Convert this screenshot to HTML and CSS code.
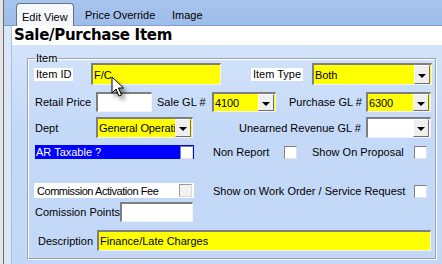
FILE: index.html
```html
<!DOCTYPE html>
<html lang="en">
<head>
    <meta charset="UTF-8">
    <meta name="viewport" content="width=device-width, initial-scale=1.0">
    <title>Sale/Purchase Item</title>
    <link rel="stylesheet" href="styles.css">
</head>
<body>
    <div class="window">
        <div class="frame-edge"></div>
        <div class="window-body">
            <div class="tab-strip">
                <div class="tab tab-active">Edit View</div>
                <div class="tab tab-price">Price Override</div>
                <div class="tab">Image</div>
            </div>
            <div class="page">
                <div class="page-edge"></div>
                <div class="page-main">
                    <h1 class="page-title">Sale/Purchase Item</h1>
                    <div class="panel">
                        <fieldset class="group">
                            <legend>Item</legend>

                            <div class="row row-1">
                                <div class="cell"><span class="tag-white">Item ID</span></div>
                                <div class="input yellow">F/C</div>
                                <div class="cell pad-30"><span class="tag-white">Item Type</span></div>
                                <div class="input combo yellow">
                                    <span class="combo-text">Both</span>
                                    <span class="combo-btn"><span class="arrow"></span></span>
                                </div>
                            </div>

                            <div class="row row-2">
                                <div class="cell pad-1">Retail Price</div>
                                <div class="input"></div>
                                <div class="cell pad-5">Sale GL #</div>
                                <div class="input combo yellow">
                                    <span class="combo-text">4100</span>
                                    <span class="combo-btn"><span class="arrow"></span></span>
                                </div>
                                <div class="cell pad-13">Purchase GL #</div>
                                <div class="input combo yellow">
                                    <span class="combo-text">6300</span>
                                    <span class="combo-btn"><span class="arrow"></span></span>
                                </div>
                            </div>

                            <div class="row row-3">
                                <div class="cell pad-1">Dept</div>
                                <div class="input combo yellow">
                                    <span class="combo-text">General Operations</span>
                                    <span class="combo-btn"><span class="arrow"></span></span>
                                </div>
                                <div class="cell pad-46">Unearned Revenue GL #</div>
                                <div class="input combo">
                                    <span class="combo-text"></span>
                                    <span class="combo-btn"><span class="arrow"></span></span>
                                </div>
                            </div>

                            <div class="row row-4">
                                <div class="cell">
                                    <div class="check-label selected">
                                        <span>AR Taxable ?</span>
                                        <span class="check"></span>
                                    </div>
                                </div>
                                <div class="cell pad-19">Non Report</div>
                                <span class="check"></span>
                                <div class="cell pad-15">Show On Proposal</div>
                                <span class="check"></span>
                            </div>

                            <div class="row row-5">
                                <div class="cell">
                                    <div class="check-label plain">
                                        <span class="tight">Commission Activation Fee</span>
                                        <span class="check check-dim"></span>
                                    </div>
                                </div>
                                <div class="cell pad-19">Show on Work Order / Service Request</div>
                                <span class="check"></span>
                            </div>

                            <div class="row row-6">
                                <div class="cell pad-1">Comission Points</div>
                                <div class="input"></div>
                            </div>

                            <div class="row row-7">
                                <div class="cell pad-4">Description</div>
                                <div class="input yellow">Finance/Late Charges</div>
                            </div>
                        </fieldset>
                    </div>
                </div>
            </div>
        </div>

        <!-- mouse pointer sitting over the Item ID box -->
        <svg class="pointer" width="16" height="24" viewBox="0 0 16 24">
            <path d="M1 1 L1 17 L5 13 L8 20 L10.5 19 L7.5 12 L12.5 12 Z" fill="#fff" stroke="#000" stroke-width="1" stroke-linejoin="miter"/>
        </svg>
    </div>
</body>
</html>
```

FILE: styles.css
```css
* {
    box-sizing: border-box;
}
body {
    margin: 0;
    font-family: "Liberation Sans", Arial, sans-serif;
    font-size: 11px;
    color: #000;
    overflow: hidden;
}
.window {
    position: relative;
    display: flex;
    width: 442px;
    height: 264px;
    overflow: hidden;
}
.frame-edge {
    width: 4px;
    background-color: #e4e4e4;
    border-right: 1px solid #6e6e6e;
}
.window-body {
    flex: 1;
    display: flex;
    flex-direction: column;
}
.tab-strip {
    display: flex;
    align-items: flex-end;
    height: 26px;
    padding-left: 12px;
    background: linear-gradient(#a7c4ee, #9fbde9);
    border-bottom: 1px solid #7f9fd0;
}
.tab {
    height: 23px;
    padding: 4px 6px 0 6px;
    line-height: 18px;
    white-space: nowrap;
}
.tab-active {
    width: 58px;
    margin-bottom: -1px;
    background-color: #f6f8fc;
    border: 1px solid #66748c;
    border-bottom: none;
    border-radius: 4px 4px 0 0;
    padding-left: 5px;
}
.tab-price {
    width: 87px;
    margin-left: 5px;
}
.page {
    flex: 1;
    display: flex;
}
.page-edge {
    width: 8px;
    background-color: #dbe6f6;
    border-right: 1px solid #a3c0ea;
}
.page-main {
    flex: 1;
    display: flex;
    flex-direction: column;
}
.page-title {
    margin: 0;
    height: 19px;
    padding: 0 0 0 2px;
    background-color: #fff;
    font-family: "DejaVu Sans", Verdana, sans-serif;
    font-size: 15px;
    font-weight: bold;
    line-height: 19px;
    letter-spacing: -0.3px;
}
.panel {
    flex: 1;
    padding-top: 8px;
    background: linear-gradient(#d3e3fa, #c4d9f8 40%, #c3d8f7);
}
.group {
    margin: 0 0 0 15px;
    width: 409px;
    padding: 0 0 7px 6px;
    border: 1px solid #9aa3ae;
    box-shadow: inset 1px 1px 0 #fff, 1px 1px 0 #fff;
}
.group legend {
    margin-left: 1px;
    padding: 0 1px;
    line-height: 10px;
}
.row {
    display: grid;
    align-items: center;
}
.row-1 {
    height: 22px;
    grid-template-columns: 57px 130px 91px 120px;
}
.row-2 {
    height: 20px;
    margin-top: 7px;
    grid-template-columns: 62px 56px 60px 64px 90px 65px;
}
.row-3 {
    height: 21px;
    margin-top: 5px;
    grid-template-columns: 62px 97px 173px 65px;
}
.row-4 {
    height: 14px;
    margin-top: 7px;
    grid-template-columns: 160px 90px 13px 117px 13px;
}
.row-5 {
    height: 15px;
    margin-top: 24px;
    grid-template-columns: 160px 220px 13px;
}
.row-5 > .check {
    align-self: end;
}
.row-6 {
    height: 20px;
    margin-top: 4px;
    grid-template-columns: 86px 73px;
}
.row-7 {
    height: 21px;
    margin-top: 8px;
    grid-template-columns: 63px 334px;
}
.cell {
    display: flex;
    align-items: center;
    height: 100%;
    white-space: nowrap;
}
.pad-1 { padding-left: 1px; }
.pad-4 { padding-left: 4px; }
.pad-5 { padding-left: 5px; }
.pad-13 { padding-left: 13px; }
.pad-15 { padding-left: 15px; }
.pad-19 { padding-left: 19px; }
.pad-30 { padding-left: 30px; }
.pad-46 { padding-left: 46px; }
.tag-white {
    height: 13px;
    padding: 0 2px;
    background-color: #fff;
    line-height: 13px;
}
.input {
    display: flex;
    align-items: center;
    height: 100%;
    padding-left: 1px;
    background-color: #fff;
    border-style: solid;
    border-width: 2px 1px 1px 2px;
    border-color: #7e7e7e #f4f4f4 #f4f4f4 #7e7e7e;
    white-space: nowrap;
    overflow: hidden;
}
.yellow {
    background-color: #ffff00;
}
.combo {
    padding-right: 1px;
}
.combo-text {
    flex: 1;
    min-width: 0;
    overflow: hidden;
    letter-spacing: -0.1px;
}
.combo-btn {
    display: flex;
    flex-shrink: 0;
    align-items: center;
    justify-content: center;
    width: 16px;
    height: 100%;
    padding-top: 2px;
    background-color: #efefef;
    border: 1px solid;
    border-color: #fff #6f6f6f #6f6f6f #fff;
}
.arrow {
    width: 0;
    height: 0;
    border-left: 4px solid transparent;
    border-right: 4px solid transparent;
    border-top: 4px solid #000;
}
.check {
    display: block;
    flex-shrink: 0;
    width: 13px;
    height: 13px;
    background-color: #fff;
    border: 1px solid;
    border-color: #808080 #e2e2e2 #e2e2e2 #808080;
}
.check-dim {
    background-color: #f3f3f3;
    border-color: #9a9a9a #dadada #dadada #9a9a9a;
}
.check-label {
    display: flex;
    align-items: center;
    justify-content: space-between;
    white-space: nowrap;
}
.check-label.selected {
    width: 159px;
    height: 14px;
    margin-left: 1px;
    padding: 0 1px 0 1px;
    background-color: #0000ff;
    color: #fff;
}
.check-label.plain {
    width: 160px;
    height: 15px;
    padding: 0 2px 0 3px;
    background-color: #fff;
}
.tight {
    letter-spacing: -0.45px;
}
.pointer {
    position: absolute;
    left: 111px;
    top: 76px;
    filter: drop-shadow(3px 4px 2px rgba(0, 0, 0, 0.45));
}
```
